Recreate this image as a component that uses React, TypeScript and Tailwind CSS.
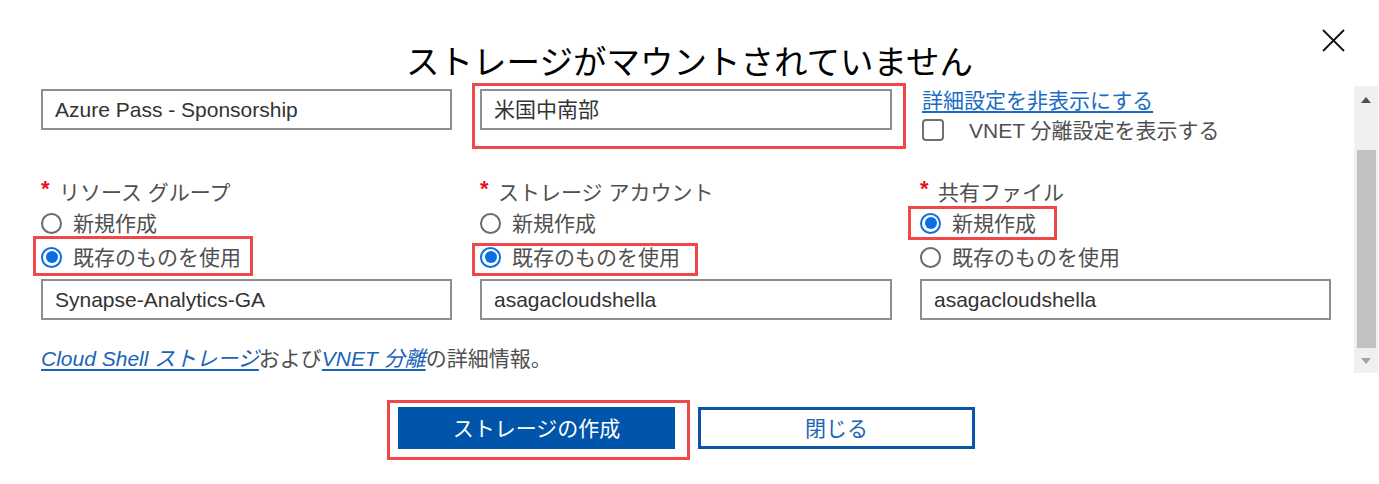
import React from 'react'

const FONT = '"Liberation Sans", "Noto Sans CJK JP", sans-serif'

function Mark({ className }: { className: string }) {
  return <span className={`pointer-events-none absolute border-[3px] border-[#f04848] ${className}`} aria-hidden />
}

function TextBox({ value, className = '' }: { value: string; className?: string }) {
  return (
    <div className={`flex h-[41px] items-center border-2 border-[#8e8e8e] bg-white pl-[12px] text-[#333] ${className}`}>
      {value}
    </div>
  )
}

function Radio({ label, checked, mark }: { label: string; checked?: boolean; mark?: string }) {
  return (
    <div className="relative flex h-[34px] w-fit items-center gap-[11px]">
      {checked ? (
        <span className="flex h-[21px] w-[21px] items-center justify-center rounded-full border-2 border-[#0a6fe0]">
          <span className="h-[12px] w-[12px] rounded-full bg-[#0a6fe0]" />
        </span>
      ) : (
        <span className="h-[21px] w-[21px] rounded-full border-2 border-[#6b6b6b]" />
      )}
      <span className="text-[#505050]">{label}</span>
      {mark && <Mark className={mark} />}
    </div>
  )
}

function Group({
  label,
  value,
  selected,
  mark,
}: {
  label: string
  value: string
  selected: 'new' | 'existing'
  mark: string
}) {
  return (
    <div className="flex flex-col">
      <div className="flex h-[28px] items-center">
        <span className="relative -top-[3px] w-[18px] text-[22px] font-bold text-[#e81123]">*</span>
        <span className="text-[#505050]">{label}</span>
      </div>
      <Radio label="新規作成" checked={selected === 'new'} mark={selected === 'new' ? mark : undefined} />
      <Radio label="既存のものを使用" checked={selected === 'existing'} mark={selected === 'existing' ? mark : undefined} />
      <TextBox value={value} className="mt-[5px]" />
    </div>
  )
}

function Scrollbar() {
  return (
    <div className="flex w-[24px] flex-col items-center bg-[#f0f0f0]">
      <div className="flex h-[26px] items-center justify-center pt-[1px]">
        <svg width="10" height="6" viewBox="0 0 10 6">
          <path d="M0 6 L5 0 L10 6 Z" fill="#505050" />
        </svg>
      </div>
      <div className="mt-[38px] h-[198px] w-[19px] bg-[#c1c1c1]" />
      <div className="flex h-[25px] items-center justify-center">
        <svg width="10" height="6" viewBox="0 0 10 6">
          <path d="M0 0 L10 0 L5 6 Z" fill="#a3a3a3" />
        </svg>
      </div>
    </div>
  )
}

export default function App() {
  return (
    <div className="relative h-[484px] w-[1379px] overflow-hidden bg-white text-[21px] leading-none" style={{ fontFamily: FONT }}>
      <div className="flex h-[86px] justify-center pt-[46px]">
        <h1 className="text-[33.5px] leading-[33px] text-black">ストレージがマウントされていません</h1>
      </div>
      <button className="absolute left-[1321px] top-[28px]" aria-label="close">
        <svg width="25" height="25" viewBox="0 0 25 25">
          <path d="M2 2 L23 23 M23 2 L2 23" stroke="#111" strokeWidth="1.8" />
        </svg>
      </button>

      <div className="flex h-[287px]">
        <div className="flex w-[1354px] flex-col pl-[41px]">
          <div className="grid grid-cols-[411px_412px_411px] gap-x-[28px]">
            <TextBox value="Azure Pass - Sponsorship" className="mt-[3px]" />
            <div className="relative mt-[3px]">
              <TextBox value="米国中南部" />
              <Mark className="-bottom-[7px] -left-[8px] -right-[14px] -top-[6px]" />
            </div>
            <div className="flex flex-col pl-[2px]">
              <a className="flex h-[28px] items-center text-[#1a6cc4] underline underline-offset-[3px]">詳細設定を非表示にする</a>
              <label className="flex h-[28px] items-center gap-[25px] pt-[4px]">
                <span className="h-[22px] w-[22px] rounded-[4px] border-2 border-[#707070]" />
                <span className="text-[#505050]">VNET 分離設定を表示する</span>
              </label>
            </div>
          </div>

          <div className="mt-[36px] grid grid-cols-[411px_412px_411px] gap-x-[28px]">
            <Group label="リソース グループ" value="Synapse-Analytics-GA" selected="existing" mark="-bottom-[2px] -left-[8px] -right-[12px] -top-[4px]" />
            <Group label="ストレージ アカウント" value="asagacloudshella" selected="existing" mark="-bottom-[2px] -left-[8px] -right-[18px] top-[3px]" />
            <Group label="共有ファイル" value="asagacloudshella" selected="new" mark="-bottom-[0px] -left-[12px] -right-[21px] top-[0px]" />
          </div>

          <p className="mt-[24px] flex h-[28px] items-center text-[#505050]">
            <a className="italic text-[#1a64b8] underline underline-offset-[3px]">Cloud Shell ストレージ</a>
            および
            <a className="italic text-[#1a64b8] underline underline-offset-[3px]">VNET 分離</a>
            の詳細情報。
          </p>
        </div>
        <Scrollbar />
      </div>

      <div className="flex justify-center gap-[23px] pr-[6px] pt-[34px]">
        <div className="relative">
          <button className="h-[42px] w-[277px] bg-[#0055aa] text-white">ストレージの作成</button>
          <Mark className="-bottom-[11px] -left-[11px] -right-[15px] -top-[7px]" />
        </div>
        <button className="h-[42px] w-[277px] border-[3px] border-[#0a55a8] bg-white text-[#1a64b4]">閉じる</button>
      </div>
    </div>
  )
}
